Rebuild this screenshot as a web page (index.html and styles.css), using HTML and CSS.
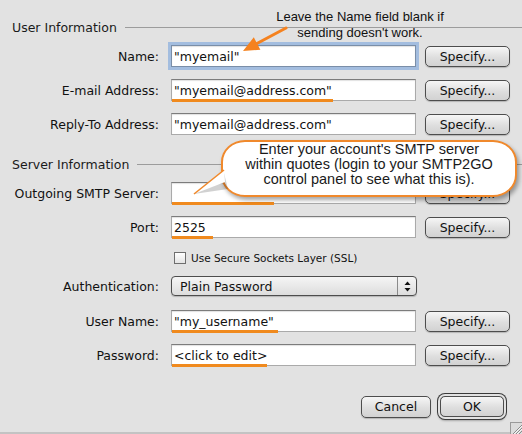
FILE: index.html
```html
<!DOCTYPE html>
<html>
<head>
<meta charset="utf-8">
<link rel="stylesheet" href="styles.css">
</head>
<body>
<div class="dialog">
  <div class="group-title first"><span>User Information</span></div>

  <div class="row row-first">
    <label class="label">Name:</label>
    <div class="field focused"><span class="val">"myemail"</span></div>
    <button class="btn">Specify...</button>
  </div>
  <div class="row">
    <label class="label">E-mail Address:</label>
    <div class="field"><span class="val">"myemail@address.com"</span><span class="mark mark-email"></span></div>
    <button class="btn">Specify...</button>
  </div>
  <div class="row">
    <label class="label">Reply-To Address:</label>
    <div class="field"><span class="val">"myemail@address.com"</span></div>
    <button class="btn">Specify...</button>
  </div>

  <div class="group-title second"><span>Server Information</span></div>

  <div class="row row-first">
    <label class="label">Outgoing SMTP Server:</label>
    <div class="field"><span class="val"></span><span class="mark mark-smtp"></span></div>
    <button class="btn">Specify...</button>
  </div>
  <div class="row">
    <label class="label">Port:</label>
    <div class="field"><span class="val">2525</span><span class="mark mark-port"></span></div>
    <button class="btn">Specify...</button>
  </div>
  <div class="check-row">
    <span class="checkbox"></span>
    <span class="check-label">Use Secure Sockets Layer (SSL)</span>
  </div>
  <div class="row row-auth">
    <label class="label">Authentication:</label>
    <div class="popup">
      <span class="popup-val">Plain Password</span>
      <span class="popup-arrows">
        <svg width="7" height="11" viewBox="0 0 7 11"><polygon points="3.5,0.5 6.5,4 0.5,4" fill="#111"/><polygon points="0.5,7 6.5,7 3.5,10.5" fill="#111"/></svg>
      </span>
    </div>
  </div>
  <div class="row row-user">
    <label class="label">User Name:</label>
    <div class="field"><span class="val">"my_username"</span><span class="mark mark-user"></span></div>
    <button class="btn">Specify...</button>
  </div>
  <div class="row">
    <label class="label">Password:</label>
    <div class="field"><span class="val">&lt;click to edit&gt;</span><span class="mark mark-pass"></span></div>
    <button class="btn">Specify...</button>
  </div>

  <div class="actions">
    <button class="btn btn-cancel">Cancel</button>
    <button class="btn btn-ok">OK</button>
  </div>

  <div class="bottom-strip"></div>

  <!-- annotations -->
  <div class="note">Leave the Name field blank if<br>sending doesn't work.</div>
  <svg class="arrow" width="52" height="34" viewBox="0 0 52 34">
    <line x1="48" y1="6" x2="18" y2="22" stroke="#f5821f" stroke-width="3" stroke-linecap="round"/>
    <polygon points="5,29 15.8,15.3 22.4,27.7" fill="#f5821f"/>
  </svg>

  <div class="bubble">Enter your account's SMTP server<br>within quotes (login to your SMTP2GO<br>control panel to see what this is).</div>
  <svg class="tail" width="40" height="34" viewBox="0 0 40 34">
    <polygon points="36,12 6,33 40,28" fill="rgba(0,0,0,0.18)"/>
    <polygon points="36,9 6,33 37,21" fill="#fff"/>
    <line x1="36" y1="9" x2="6" y2="33" stroke="#f0892c" stroke-width="1.6"/>
  </svg>

  <svg class="grip" width="12" height="12" viewBox="0 0 12 12">
    <rect x="0" y="0" width="12" height="12" fill="#dcdcdc"/>
    <line x1="0.5" y1="0" x2="0.5" y2="12" stroke="#9a9a9a"/>
    <line x1="0" y1="0.5" x2="12" y2="0.5" stroke="#9a9a9a"/>
    <line x1="3" y1="12" x2="12" y2="3" stroke="#8a8a8a"/>
    <line x1="6" y1="12" x2="12" y2="6" stroke="#8a8a8a"/>
    <line x1="9" y1="12" x2="12" y2="9" stroke="#8a8a8a"/>
    <line x1="4" y1="12" x2="12" y2="4" stroke="#f6f6f6"/>
    <line x1="7" y1="12" x2="12" y2="7" stroke="#f6f6f6"/>
  </svg>
</div>
</body>
</html>
```

FILE: styles.css
```css
* { box-sizing: border-box; }

html, body {
  margin: 0;
  padding: 0;
}

body {
  width: 522px;
  height: 434px;
  overflow: hidden;
  background: #e2e2e2;
  font-family: "DejaVu Sans", "Noto Sans", sans-serif;
  font-size: 12.5px;
  color: #111;
}

.dialog {
  position: relative;
  height: 434px;
  display: flex;
  flex-direction: column;
}

.group-title {
  display: flex;
  align-items: center;
  height: 20px;
  padding-left: 12px;
  color: #1a1a1a;
}

.group-title::after {
  content: "";
  flex: 1;
  border-top: 1px solid #9c9c9c;
  margin-left: 8px;
}

.group-title.first { margin-top: 17px; }
.group-title.second { margin-top: 19px; }

.row {
  display: flex;
  align-items: center;
  height: 22px;
  margin-top: 12px;
}

.row.row-first { margin-top: 8px; }
.row.row-auth { margin-top: 11px; }
.row.row-user { margin-top: 13px; }

.label {
  width: 159px;
  margin-right: 12px;
  text-align: right;
  white-space: nowrap;
}

.field {
  position: relative;
  width: 245px;
  height: 22px;
  display: flex;
  align-items: center;
  padding-left: 2px;
  background: #fff;
  border: 1px solid #aaaaaa;
  border-top-color: #7c7c7c;
  box-shadow: inset 0 1px 1px rgba(0, 0, 0, 0.12);
  white-space: nowrap;
}

.field.focused {
  box-shadow: 0 0 0 3px #a3bddf, inset 0 1px 1px rgba(0, 0, 0, 0.12);
  border-color: #7a8ea8;
}

.mark {
  position: absolute;
  left: 0;
  bottom: -2px;
  height: 3px;
  background: #f08a1e;
}

.mark-email { width: 161px; }
.mark-smtp { width: 102px; }
.mark-port { width: 41px; }
.mark-user { width: 106px; }
.mark-pass { width: 95px; }

.btn {
  margin: 0 0 0 9px;
  width: 85px;
  height: 21px;
  padding: 0;
  font-family: inherit;
  font-size: 12.5px;
  color: #111;
  background: linear-gradient(#f6f6f6, #dedede 55%, #d2d2d2);
  border: 1px solid #4d4d4d;
  border-radius: 5px;
  box-shadow: 0 1px 1px rgba(0, 0, 0, 0.2);
}

.check-row {
  display: flex;
  align-items: center;
  height: 12px;
  margin-top: 14px;
  padding-left: 174px;
}

.checkbox {
  width: 12px;
  height: 12px;
  border: 1px solid #6e6e6e;
  background: linear-gradient(#ffffff, #e4e4e4);
}

.check-label {
  margin-left: 5px;
  font-size: 10.5px;
}

.popup {
  width: 246px;
  height: 20px;
  display: flex;
  align-items: stretch;
  border: 1px solid #4d4d4d;
  border-radius: 4px;
  background: linear-gradient(#f5f5f5, #dddddd);
  box-shadow: 0 1px 1px rgba(0, 0, 0, 0.2);
}

.popup-val {
  flex: 1;
  display: flex;
  align-items: center;
  padding-left: 8px;
}

.popup-arrows {
  width: 19px;
  display: flex;
  align-items: center;
  justify-content: center;
  border-left: 1px solid #8a8a8a;
}

.actions {
  display: flex;
  justify-content: flex-end;
  align-items: center;
  height: 27px;
  margin-top: 27px;
  padding-right: 15px;
}

.btn-cancel {
  width: 70px;
  height: 22px;
  margin: 0 9px 0 0;
}

.btn-ok {
  width: 64px;
  height: 21px;
  margin: 0 3px 0 0;
  box-shadow: 0 0 0 2px #e2e2e2, 0 0 0 3px #3a3a3a, 0 2px 2px 2px rgba(0, 0, 0, 0.25);
}

.bottom-strip {
  margin-top: auto;
  height: 2px;
  background: #c3c3c3;
}

.note {
  position: absolute;
  left: 260px;
  top: 9px;
  width: 200px;
  text-align: center;
  font-family: "Liberation Sans", Arial, sans-serif;
  font-size: 13px;
  line-height: 16px;
  color: #111;
}

.arrow {
  position: absolute;
  left: 238px;
  top: 22px;
}

.bubble {
  position: absolute;
  left: 221px;
  top: 140px;
  width: 296px;
  height: 57px;
  background: #fff;
  border: 2px solid #f0892c;
  border-radius: 24px / 22px;
  box-shadow: 2px 3px 4px rgba(0, 0, 0, 0.35);
  text-align: center;
  font-family: "Liberation Sans", Arial, sans-serif;
  font-size: 14.5px;
  line-height: 15px;
  color: #1a1a1a;
}

.tail {
  position: absolute;
  left: 188px;
  top: 161px;
}

.grip {
  position: absolute;
  right: 0;
  bottom: 0;
}
```
